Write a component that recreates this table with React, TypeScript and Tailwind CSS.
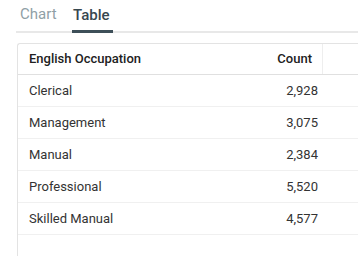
import React from 'react';

const rows = [
  { name: 'Clerical', count: 2928 },
  { name: 'Management', count: 3075 },
  { name: 'Manual', count: 2384 },
  { name: 'Professional', count: 5520 },
  { name: 'Skilled Manual', count: 4577 },
];

const App: React.FC = () => {
  return (
    <div className="w-[358px] h-[256px] overflow-hidden bg-white font-['Roboto',sans-serif]">
      {/* tabs */}
      <div className="ml-[16px] mt-[4px] flex items-end border-b-2 border-[#e8e8e8] h-[29px]">
        <div className="ml-[4px] w-[40px] h-[28px] flex items-start text-[15px] text-[#8fa0a6]">Chart</div>
        <div className="ml-[12px] w-[41px] h-[29px] -mb-[2px] flex items-start pl-[1px] text-[15px] font-medium text-[#37474f] border-b-[3px] border-[#3d4f58]">
          Table
        </div>
      </div>

      {/* table */}
      <div className="ml-[17px] mt-[10px] w-[360px] border-l border-t border-[#e3e3e3] rounded-tl-[3px] h-[220px]">
        <div className="flex h-[31px] border-b border-[#e0e0e0] text-[13px] font-medium text-[#212121]">
          <div className="w-[180px] flex items-center pl-[11px]">English Occupation</div>
          <div className="w-[125px] flex items-center justify-end pr-[10px] border-r border-[#eeeeee]">Count</div>
        </div>
        {rows.map((r) => (
          <div key={r.name} className="flex h-[32px] border-b border-[#f0f0f0] text-[13px] text-[#333333]">
            <div className="w-[180px] flex items-center pl-[11px]">{r.name}</div>
            <div className="w-[120px] flex items-center justify-end">{r.count.toLocaleString('en-US')}</div>
          </div>
        ))}
      </div>
    </div>
  );
};

export default App;
